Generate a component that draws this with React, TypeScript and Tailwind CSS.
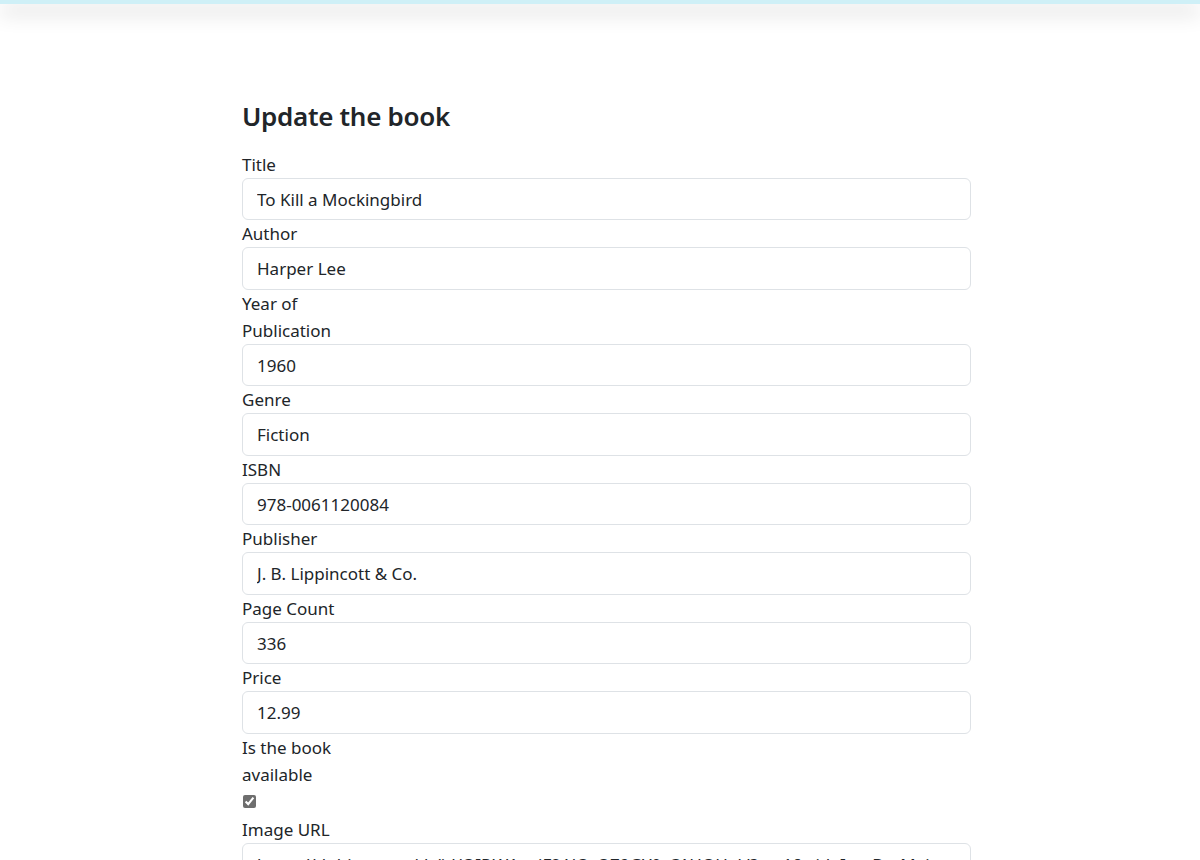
const fields = [
    { label: "Title", value: "To Kill a Mockingbird" },
    { label: "Author", value: "Harper Lee" },
    { label: "Year of Publication", value: "1960" },
    { label: "Genre", value: "Fiction" },
    { label: "ISBN", value: "978-0061120084" },
    { label: "Publisher", value: "J. B. Lippincott & Co." },
    { label: "Page Count", value: "336" },
    { label: "Price", value: "12.99" },
];

function Field({ label, value }: { label: string; value: string }) {
    return (
        <div>
            <label className="block w-[120px] leading-[27px]">{label}</label>
            <input
                type="text"
                defaultValue={value}
                className="block w-full h-[42.5px] px-[14px] border border-[#dee2e6] rounded-md text-[#212529] bg-white outline-none"
            />
        </div>
    );
}

export default function App() {
    return (
        <div className="min-h-screen bg-white text-[#212529] text-[17px]" style={{ fontFamily: '"Noto Sans", sans-serif' }}>
            <div className="h-1 bg-[#cff0f7] shadow-[0_8px_20px_rgba(0,0,0,0.3)]" />
            <main className="pl-[242px] pt-[96px] pb-10">
                <form className="w-[729px]">
                    <h3 className="text-[26px] leading-[1.3] font-semibold tracking-[-0.3px] mb-[17px]">Update the book</h3>
                    {fields.map((f) => (
                        <Field key={f.label} label={f.label} value={f.value} />
                    ))}
                    <label className="block w-[120px] leading-[27px]">Is the book available</label>
                    <div className="flex items-center h-[28px]">
                        <input type="checkbox" checked readOnly className="ml-px w-[13px] h-[13px] accent-[#6e6e6e]" />
                    </div>
                    <Field
                        label="Image URL"
                        value="https://th.bing.com/th/id/OIP.W1oejF2AlQ_OZ9GY0_C1HQHaLl?rs=1&pid=ImgDetMain"
                    />
                    <button type="submit" className="mt-4 px-3 py-1.5 rounded-md bg-[#0d6efd] text-white">
                        Update
                    </button>
                </form>
            </main>
        </div>
    );
}
